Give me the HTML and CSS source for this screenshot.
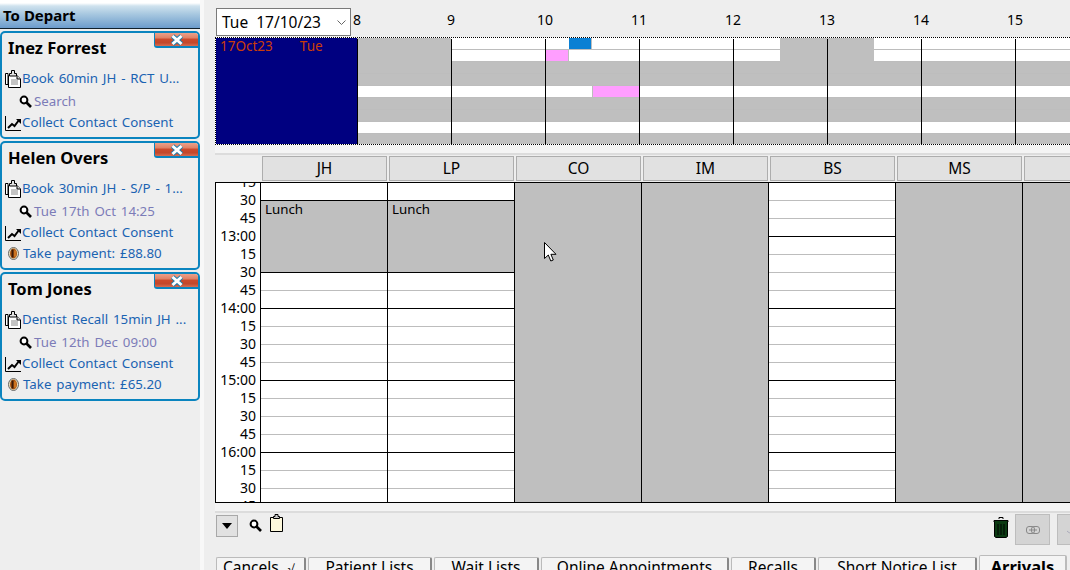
FILE: index.html
```html
<!DOCTYPE html>
<html lang="en">
<head>
<meta charset="utf-8">
<title>Appointments</title>
<link rel="stylesheet" href="styles.css">
</head>
<body>
<svg class="defs" width="0" height="0" aria-hidden="true">
  <symbol id="i-clip" viewBox="0 0 16 19">
    <path d="M3 4.500H.5V15.500H3z" fill="#fff" stroke="#000"/>
    <path d="M3.500 6.500H12L15.500 10V18.500H3.500z" fill="#fff" stroke="#000"/>
    <path d="M12 6.500V10H15.500" fill="#ddd" stroke="#000"/>
    <path d="M4.500 4.500H6.500V1.500H9.500V4.500H11.500V7H4.500z" fill="#e4e4e4" stroke="#000"/>
    <path d="M6 11h7M6 13h7M6 15h7" stroke="#888" fill="none"/>
  </symbol>
  <symbol id="i-search" viewBox="0 0 13 13">
    <circle cx="5" cy="5" r="3.400" fill="#fff" stroke="#000" stroke-width="2"/>
    <path d="M7.500 7.500L12 12" stroke="#000" stroke-width="2.600"/>
  </symbol>
  <symbol id="i-trend" viewBox="0 0 16 16">
    <path d="M.5 1V15.500H16" fill="none" stroke="#000"/>
    <path d="M3 13L7 9L9.500 11L14 5" fill="none" stroke="#000" stroke-width="2"/>
    <path d="M11 4H16V9z" fill="#000"/>
  </symbol>
  <symbol id="i-coin" viewBox="0 0 11 13">
    <ellipse cx="5.500" cy="6.500" rx="5" ry="6" fill="#e8e0c0" stroke="#666"/>
    <ellipse cx="5.500" cy="6.500" rx="3.500" ry="5" fill="#b05810"/>
    <path d="M4.500 2.500V10.500" stroke="#3a1a08" stroke-width="2"/>
    <path d="M7 3.500V9.500" stroke="#e89030"/>
  </symbol>
  <symbol id="i-x" viewBox="0 0 14 12">
    <path d="M2.500 2L11.500 10M11.500 2L2.500 10" stroke="#1c7fb0" stroke-width="4.800"/>
    <path d="M2.500 2L11.500 10M11.500 2L2.500 10" stroke="#fff" stroke-width="3"/>
  </symbol>
</svg>

<aside class="sidebar">
  <h1 class="side-title">To Depart</h1>

  <section class="card">
    <button class="close" type="button"><svg class="x-icon"><use href="#i-x"/></svg></button>
    <h2 class="name">Inez Forrest</h2>
    <div class="row row-first"><svg class="ic-clip"><use href="#i-clip"/></svg><a class="link">Book 60min JH - RCT U...</a></div>
    <div class="row row-search"><svg class="ic-search"><use href="#i-search"/></svg><a class="muted">Search</a></div>
    <div class="row"><svg class="ic-trend"><use href="#i-trend"/></svg><a class="link">Collect Contact Consent</a></div>
  </section>

  <section class="card">
    <button class="close" type="button"><svg class="x-icon"><use href="#i-x"/></svg></button>
    <h2 class="name">Helen Overs</h2>
    <div class="row row-first"><svg class="ic-clip"><use href="#i-clip"/></svg><a class="link">Book 30min JH - S/P - 1...</a></div>
    <div class="row row-search"><svg class="ic-search"><use href="#i-search"/></svg><a class="muted">Tue 17th Oct 14:25</a></div>
    <div class="row"><svg class="ic-trend"><use href="#i-trend"/></svg><a class="link">Collect Contact Consent</a></div>
    <div class="row"><svg class="ic-coin"><use href="#i-coin"/></svg><a class="link">Take payment: £88.80</a></div>
  </section>

  <section class="card">
    <button class="close" type="button"><svg class="x-icon"><use href="#i-x"/></svg></button>
    <h2 class="name">Tom Jones</h2>
    <div class="row row-first"><svg class="ic-clip"><use href="#i-clip"/></svg><a class="link">Dentist Recall 15min JH ...</a></div>
    <div class="row row-search"><svg class="ic-search"><use href="#i-search"/></svg><a class="muted">Tue 12th Dec 09:00</a></div>
    <div class="row"><svg class="ic-trend"><use href="#i-trend"/></svg><a class="link">Collect Contact Consent</a></div>
    <div class="row"><svg class="ic-coin"><use href="#i-coin"/></svg><a class="link">Take payment: £65.20</a></div>
  </section>
</aside>

<div class="splitter"></div>

<main class="main">
  <div class="topbar">
    <div class="date-select">
      <span>Tue&nbsp; 17/10/23</span>
      <svg class="chev" viewBox="0 0 9 5"><path d="M.5 .5L4.500 4.500L8.500 .5" fill="none" stroke="#666"/></svg>
    </div>
    <div class="hour-labels">
      <span>8</span><span>9</span><span>10</span><span>11</span><span>12</span><span>13</span><span>14</span><span>15</span>
    </div>
  </div>

  <div class="overview">
    <div class="day-cell"><span>17Oct23</span><span>Tue</span></div>
    <div class="timeline">
      <div class="tl-row"><i class="tl-gray q-8"></i><i class="tl-blue q-1015"></i><i class="tl-gray q-1230"></i></div>
      <div class="tl-row"><i class="tl-gray q-8"></i><i class="tl-pink q-10"></i><i class="tl-gray q-1230"></i></div>
      <div class="tl-row tl-off"></div>
      <div class="tl-row tl-off"></div>
      <div class="tl-row"><i class="tl-pink q-1030"></i></div>
      <div class="tl-row tl-off"></div>
      <div class="tl-row tl-off"></div>
      <div class="tl-row"></div>
      <div class="tl-row tl-off"></div>
      <div class="tl-lines"><i></i><i></i><i></i><i></i><i></i><i></i><i></i><i></i></div>
    </div>
  </div>

  <div class="divider divider-top"></div>

  <div class="heads">
    <div class="head">JH</div><div class="head">LP</div><div class="head">CO</div><div class="head">IM</div><div class="head">BS</div><div class="head">MS</div><div class="head"></div>
  </div>

  <div class="diary">
    <div class="times">
      <span>15</span><span>30</span><span>45</span><span>13:00</span><span>15</span><span>30</span><span>45</span><span>14:00</span><span>15</span><span>30</span><span>45</span><span>15:00</span><span>15</span><span>30</span><span>45</span><span>16:00</span><span>15</span><span>30</span><span>45</span>
    </div>
    <div class="col">
      <div class="slot hr"></div>
      <div class="lunch">Lunch</div>
      <div class="slot"></div><div class="slot hr"></div>
      <div class="slot"></div><div class="slot"></div><div class="slot"></div><div class="slot hr"></div>
      <div class="slot"></div><div class="slot"></div><div class="slot"></div><div class="slot hr"></div>
      <div class="slot"></div><div class="slot"></div>
    </div>
    <div class="col">
      <div class="slot hr"></div>
      <div class="lunch">Lunch</div>
      <div class="slot"></div><div class="slot hr"></div>
      <div class="slot"></div><div class="slot"></div><div class="slot"></div><div class="slot hr"></div>
      <div class="slot"></div><div class="slot"></div><div class="slot"></div><div class="slot hr"></div>
      <div class="slot"></div><div class="slot"></div>
    </div>
    <div class="col col-off"></div>
    <div class="col col-off"></div>
    <div class="col">
      <div class="slot"></div><div class="slot"></div><div class="slot hr"></div>
      <div class="slot"></div><div class="slot"></div><div class="slot"></div><div class="slot hr"></div>
      <div class="slot"></div><div class="slot"></div><div class="slot"></div><div class="slot hr"></div>
      <div class="slot"></div><div class="slot"></div><div class="slot"></div><div class="slot hr"></div>
      <div class="slot"></div><div class="slot"></div>
    </div>
    <div class="col col-off"></div>
    <div class="col col-off"></div>
    <svg class="cursor" viewBox="0 0 13 20"><path d="M.5 .5V16.500L4.300 13L6.800 19L9.300 18L6.900 12.300H12z" fill="#fff" stroke="#000"/></svg>
  </div>

  <div class="divider divider-bottom"></div>

  <div class="toolbar">
    <button class="drop" type="button"><svg viewBox="0 0 10 6"><path d="M0 0H10L5 6z" fill="#000"/></svg></button>
    <svg class="tb-search"><use href="#i-search"/></svg>
    <svg class="tb-clip" viewBox="0 0 13 18">
      <path d="M.5 3.500H12.500V17.500H.5z" fill="#fdf8dc" stroke="#000"/>
      <path d="M3.500 4.500V2.500H5V.5H8V2.500H9.500V4.500z" fill="#ccc" stroke="#000"/>
    </svg>
    <svg class="trash" viewBox="0 0 16 21">
      <path d="M6 2V.5H10V2" fill="none" stroke="#000"/>
      <path d="M1 3.500H15V5H14.500V19.500L13 20.500H3L1.500 19.500V5H1z" fill="#0b3a12" stroke="#000"/>
      <path d="M5 7V18M8 7V18M11 7V18" stroke="#000"/>
    </svg>
    <button class="tool" type="button">
      <svg viewBox="0 0 14 8"><rect x=".5" y=".5" width="8" height="7" rx="2.500" fill="none" stroke="#888"/><rect x="5.500" y=".5" width="8" height="7" rx="2.500" fill="none" stroke="#888"/><path d="M3 4H11" stroke="#888"/></svg>
    </button>
    <button class="tool tool-next" type="button">
      <svg viewBox="0 0 10 8"><path d="M1 5L3.500 7L9 1" fill="none" stroke="#aab"/></svg>
    </button>
  </div>

  <nav class="tabs">
    <a class="tab tab-cancels">Cancels <span class="tick">√</span></a>
    <a class="tab tab-patient">Patient Lists</a>
    <a class="tab tab-wait">Wait Lists</a>
    <a class="tab tab-online">Online Appointments</a>
    <a class="tab tab-recalls">Recalls</a>
    <a class="tab tab-short">Short Notice List</a>
    <a class="tab tab-arrivals">Arrivals</a>
  </nav>
</main>
</body>
</html>
```

FILE: styles.css
```css
* { box-sizing: border-box; }

html, body {
  margin: 0;
  width: 1070px;
  height: 570px;
  overflow: hidden;
}

body {
  display: flex;
  background: #eeeeee;
  color: #000;
  font-family: "Noto Sans", "Open Sans", sans-serif;
  font-size: 14px;
}

.defs { position: absolute; }

/* ---------- sidebar ---------- */
.sidebar {
  flex: 0 0 200px;
  display: flex;
  flex-direction: column;
  height: 570px;
  background: #eeeeee;
}

.side-title {
  margin: 0 0 2px;
  height: 29px;
  padding: 3px 0 0 3px;
  border-bottom: 1px solid #10202c;
  background: linear-gradient(#ffffff 0, #ffffff 3px, #cfe2ee 6px, #a8c8e0 14px, #6c9ccc 28px);
  font-size: 15px;
  font-weight: 700;
  line-height: 24px;
}

.card {
  position: relative;
  margin-bottom: 2px;
  padding-bottom: 4px;
  border: 2px solid #0a84bf;
  border-radius: 5px;
  background: #eeeeee;
}

.close {
  position: absolute;
  top: 0;
  right: 0;
  width: 44px;
  height: 15px;
  padding: 0;
  display: flex;
  align-items: center;
  justify-content: center;
  border: 0;
  border-left: 1px solid #0a84bf;
  border-bottom: 2px solid #0a84bf;
  border-radius: 0 3px 0 3px;
  background: linear-gradient(#eca08a 0, #e08468 35%, #cc4a2c 50%, #c2482c 75%, #d86c50 100%);
}

.x-icon { width: 14px; height: 12px; display: block; }

.name {
  margin: 0;
  height: 34px;
  padding-left: 6px;
  font-size: 16.500px;
  font-weight: 700;
  line-height: 30px;
}

.row {
  display: flex;
  align-items: center;
  height: 21px;
  padding-left: 3px;
  white-space: nowrap;
  font-size: 13.300px;
  word-spacing: 1.400px;
  line-height: 21px;
}

.row-first { margin-top: 1px; }
.row-search { margin-top: 2px; padding-left: 17px; }

.link { color: #1a63b2; }
.muted { color: #7c7cb8; }

.ic-clip { flex: none; width: 16px; height: 19px; margin-right: 1px; }
.ic-search { flex: none; width: 13px; height: 13px; margin-right: 2px; }
.ic-trend { flex: none; width: 16px; height: 16px; margin-right: 1px; }
.ic-coin { flex: none; width: 11px; height: 13px; margin: 0 4px 0 3px; }

.splitter {
  flex: 0 0 4px;
  background: #f8f8f8;
}

/* ---------- main ---------- */
.main {
  flex: none;
  width: 855px;
  height: 570px;
  margin-left: 11px;
  display: flex;
  flex-direction: column;
  overflow: hidden;
}

.topbar {
  flex: none;
  height: 37px;
  display: flex;
  padding-top: 8px;
}

.date-select {
  flex: none;
  margin-left: 1px;
  width: 135px;
  height: 28px;
  display: flex;
  align-items: center;
  justify-content: space-between;
  padding: 0 4px 0 5px;
  border: 1px solid #7a7a7a;
  background: #fff;
  font-size: 15.500px;
}

.chev { width: 9px; height: 5px; }

.hour-labels {
  margin-left: -41px;
  display: flex;
  height: 24px;
}

.hour-labels span {
  flex: 0 0 94px;
  text-align: center;
  font-size: 14px;
  line-height: 24px;
}

.overview {
  flex: none;
  height: 108px;
  display: flex;
  border-top: 1px dotted #000;
  border-bottom: 1px dotted #000;
  border-left: 1px dotted #000;
  background: #fff;
}

.day-cell {
  flex: 0 0 141px;
  display: flex;
  gap: 27px;
  padding-left: 4px;
  background: #000080;
  color: #cc3d08;
  font-size: 13.500px;
  line-height: 17px;
}

.timeline {
  position: relative;
  flex: 1;
  overflow: hidden;
}

.tl-row {
  display: grid;
  grid-template-columns: repeat(32, 23.5px);
  height: 12px;
  border-bottom: 1px solid #bdbdbd;
  background: #fff;
}

.tl-off { background: #bfbfbf; }

.tl-gray { background: #bfbfbf; }
.tl-blue { background: #0a80d4; }
.tl-pink { background: #ff9eff; }

.q-8 { grid-column: 1 / 5; margin-bottom: -1px; }
.q-10 { grid-column: 9 / 10; border-right: 1px solid #bdbdbd; }
.q-1015 { grid-column: 10 / 11; border-right: 1px solid #bdbdbd; }
.q-1030 { grid-column: 11 / 13; border-left: 1px solid #bdbdbd; }
.q-1230 { grid-column: 19 / 23; margin-bottom: -1px; }

.tl-lines {
  position: absolute;
  inset: 1px 0 0 0;
  display: flex;
}

.tl-lines i {
  flex: 0 0 94px;
  border-left: 1px solid #000;
}

.divider {
  flex: none;
  border-bottom: 2px solid #dcdcdc;
  background: #f4f4f4;
}

.divider-top { height: 10px; margin-left: -1px; }
.divider-bottom { height: 10px; margin-left: -1px; }

.heads {
  flex: none;
  display: flex;
  gap: 2px;
  height: 27px;
  padding: 1px 0 0 47px;
}

.head {
  flex: 0 0 125px;
  height: 25px;
  border: 1px solid #adadad;
  background: #e1e1e1;
  text-align: center;
  font-size: 15.500px;
  line-height: 23px;
}

.diary {
  position: relative;
  flex: none;
  height: 321px;
  display: flex;
  overflow: hidden;
  border: 1px solid #000;
  border-width: 1px 0 1px 1px;
  background: #fff;
}

.times {
  flex: 0 0 45px;
  margin-top: -10px;
  display: flex;
  flex-direction: column;
  border-right: 1px solid #000;
  padding-right: 4px;
  text-align: right;
  font-size: 14px;
}

.times span {
  flex: 0 0 18px;
  line-height: 18px;
}

.col {
  flex: 0 0 127px;
  border-right: 1px solid #000;
  overflow: hidden;
}

.col-off { background: #bfbfbf; }

.slot {
  height: 18px;
  border-bottom: 1px solid #bdbdbd;
}

.slot.hr { border-bottom-color: #000; }

.lunch {
  height: 72px;
  padding: 0 0 0 4px;
  border-bottom: 1px solid #000;
  background: #bfbfbf;
  font-size: 13.300px;
  line-height: 17px;
}

.cursor {
  position: absolute;
  left: 328px;
  top: 59px;
  width: 13px;
  height: 20px;
}

.toolbar {
  flex: none;
  height: 42px;
  display: flex;
  align-items: flex-start;
  padding: 2px 0 0 1px;
}

.drop {
  flex: none;
  width: 22px;
  height: 22px;
  padding: 0;
  display: flex;
  align-items: center;
  justify-content: center;
  border: 1px solid #a8a8a8;
  background: #e1e1e1;
}

.drop svg { width: 10px; height: 6px; }

.tb-search { flex: none; width: 13px; height: 13px; margin: 4px 0 0 11px; }
.tb-clip { flex: none; width: 13px; height: 18px; margin: -1px 0 0 8px; }
.trash { flex: none; width: 16px; height: 21px; margin: 2px 0 0 710px; }

.tool {
  flex: none;
  width: 35px;
  height: 31px;
  padding: 0;
  margin: -1px 0 0 6px;
  display: flex;
  align-items: center;
  justify-content: center;
  border: 1px solid #bdbdbd;
  background: #d4d4d4;
}

.tool svg { width: 14px; height: 8px; }
.tool-next { margin-left: 7px; justify-content: flex-start; padding-left: 8px; }
.tool-next svg { width: 10px; height: 8px; }

.tabs {
  flex: none;
  height: 15px;
  display: flex;
  align-items: flex-end;
  gap: 2px;
  padding-left: 1px;
}

.tab {
  flex: none;
  height: 13px;
  overflow: hidden;
  border: 1px solid #bbb;
  border-bottom: 0;
  border-right: 2px solid #888;
  border-radius: 2px 2px 0 0;
  background: #f4f4f4;
  text-align: center;
  font-size: 15.500px;
  line-height: 18px;
  white-space: nowrap;
}

.tab-cancels { width: 90px; text-align: left; padding-left: 6px; }
.tab-patient { width: 124px; }
.tab-wait { width: 105px; }
.tab-online { width: 188px; }
.tab-recalls { width: 85px; }
.tab-short { width: 159px; }
.tab-arrivals {
  width: 88px;
  height: 15px;
  border-right-color: #bbb;
  font-size: 16.500px;
  font-weight: 700;
  line-height: 22px;
}

.tick { font-size: 12px; margin-left: 5px; }
```
